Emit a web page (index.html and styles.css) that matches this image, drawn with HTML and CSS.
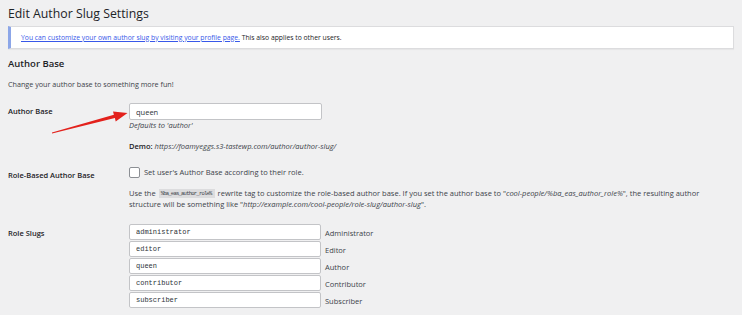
FILE: index.html
```html
<!DOCTYPE html>
<html lang="en">
<head>
    <meta charset="UTF-8">
    <title>Edit Author Slug Settings</title>
    <link rel="stylesheet" href="styles.css">
</head>
<body>
    <div class="wrap">
        <h1>Edit Author Slug Settings</h1>
        <!-- Notice -->
        <div class="notice">
            <p><a href="#">You can customize your own author slug by visiting your profile page.</a> This also applies to other users.</p>
        </div>
        <h2>Author Base</h2>
        <p class="intro">Change your author base to something more fun!</p>
        <!-- Author Base -->
        <div class="form-row row-base">
            <div class="row-label">Author Base</div>
            <div class="row-field">
                <input type="text" class="regular-text" value="queen">
                <p class="description">Defaults to 'author'</p>
                <p class="demo"><strong>Demo:</strong> <em>https://foamyeggs.s3-tastewp.com/author/author-slug/</em></p>
            </div>
        </div>
        <!-- Role-Based Author Base -->
        <div class="form-row row-role">
            <div class="row-label">Role-Based Author Base</div>
            <div class="row-field">
                <label class="check"><span class="box"></span> Set user's Author Base according to their role.</label>
                <p class="help">Use the <code>%ba_eas_author_role%</code> rewrite tag to customize the role-based author base. If you set the author base to "<em>cool-people/%ba_eas_author_role%</em>", the resulting author structure will be something like "<em>http://example.com/cool-people/role-slug/author-slug</em>".</p>
            </div>
        </div>
        <!-- Role Slugs -->
        <div class="form-row row-slugs">
            <div class="row-label">Role Slugs</div>
            <div class="row-field slugs">
                <div class="slug"><input type="text" value="administrator"><span>Administrator</span></div>
                <div class="slug"><input type="text" value="editor"><span>Editor</span></div>
                <div class="slug"><input type="text" value="queen"><span>Author</span></div>
                <div class="slug"><input type="text" value="contributor"><span>Contributor</span></div>
                <div class="slug"><input type="text" value="subscriber"><span>Subscriber</span></div>
            </div>
        </div>
    </div>
    <!-- Annotation arrow -->
    <svg class="arrow" width="742" height="315" viewBox="0 0 742 315">
        <polygon points="52,133.4 114.9,118.1 115.7,121.4 127.5,113 113,111.4 113.9,114.7 52,132.4" fill="#e3211c"/>
    </svg>
</body>
</html>
```

FILE: styles.css
```css
body {
    margin: 0;
    padding: 0;
    background-color: #f0f0f1;
    color: #1d2327;
    font-family: "Open Sans", "Noto Sans", sans-serif;
    font-size: 7.5px;
    line-height: 1.45;
}
.wrap {
    padding: 4px 8px 0 8px;
}
h1 {
    font-size: 12.3px;
    font-weight: 400;
    margin: 0;
    line-height: 20px;
}
/* Notice */
.notice {
    margin: 2px 0 0 0;
    height: 21px;
    background: #fff;
    border: 1px solid #dcdcde;
    border-left: 3px solid #8ca6e8;
    box-shadow: 0 1px 1px rgba(0, 0, 0, 0.04);
    display: flex;
    align-items: center;
    padding-left: 10px;
}
.notice p {
    margin: 0;
    font-size: 6.8px;
}
.notice a {
    color: #3858e9;
}
h2 {
    font-size: 9.5px;
    font-weight: 600;
    margin: 8px 0 0 0;
    line-height: 14px;
}
.intro {
    margin: 8px 0 0 0;
    font-size: 7.2px;
    color: #3c434a;
}
/* Form rows */
.form-row {
    display: grid;
    grid-template-columns: 121px 1fr;
}
.row-label {
    font-weight: 600;
    font-size: 7.5px;
}
.row-base {
    margin-top: 14px;
}
.row-base .row-label {
    padding-top: 3px;
}
input {
    box-sizing: border-box;
    border: 1px solid #c3c4c7;
    border-radius: 2px;
    background: #fff;
    margin: 0;
    padding: 0 6px;
    color: #2c3338;
}
.regular-text {
    display: block;
    width: 193px;
    height: 17px;
    font-family: "Open Sans", sans-serif;
    font-size: 7.5px;
}
.description {
    margin: 0;
    font-style: italic;
    color: #3c434a;
    line-height: 11px;
}
.demo {
    margin: 10px 0 0 0;
    color: #3c434a;
}
.demo strong {
    font-weight: 600;
    color: #1d2327;
}
.row-role {
    margin-top: 15px;
}
.row-role .row-label {
    padding-top: 3px;
}
.check {
    display: flex;
    align-items: center;
    gap: 4px;
    color: #3c434a;
}
.box {
    width: 9px;
    height: 9px;
    border: 1px solid #8c8f94;
    border-radius: 2px;
    background: #fff;
}
.help {
    margin: 10px 0 0 0;
    color: #3c434a;
    line-height: 11px;
    padding-right: 15px;
}
code {
    font-family: "Liberation Mono", monospace;
    font-size: 5.5px;
    letter-spacing: -0.75px;
    line-height: 1;
    background: #dcdcde;
    padding: 1px 3px 1px 2px;
    margin: 0 1px;
    vertical-align: 1px;
}
.row-slugs {
    margin-top: 14px;
}
.row-slugs .row-label {
    padding-top: 4px;
}
.slugs {
    display: flex;
    flex-direction: column;
    gap: 1px;
}
.slug {
    display: flex;
    align-items: center;
    gap: 4px;
    height: 16px;
}
.slug input {
    width: 192px;
    height: 16px;
    font-family: "Liberation Mono", monospace;
    font-size: 7px;
}
.slug span {
    color: #3c434a;
    line-height: 1;
    padding-top: 2px;
}
/* Annotation */
.arrow {
    position: absolute;
    top: 0;
    left: 0;
    pointer-events: none;
}
```
